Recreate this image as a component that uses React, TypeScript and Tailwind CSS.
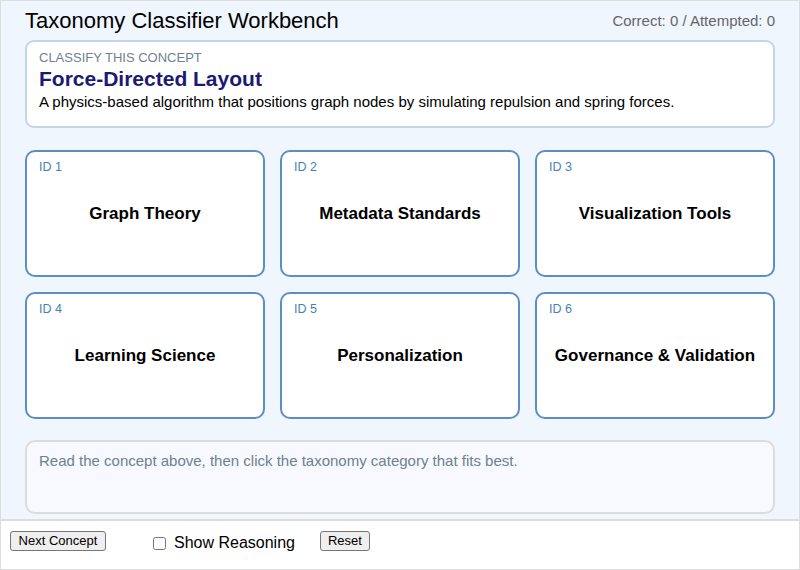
import React from "react";

const cats = [
  { id: 1, name: "Graph Theory" },
  { id: 2, name: "Metadata Standards" },
  { id: 3, name: "Visualization Tools" },
  { id: 4, name: "Learning Science" },
  { id: 5, name: "Personalization" },
  { id: 6, name: "Governance & Validation" },
];

export default function App() {
  return (
    <div
      className="w-[800px] h-[570px] border border-[#dddddd] flex flex-col bg-white"
      style={{ fontFamily: '"Liberation Sans", Arial, sans-serif' }}
    >
      <div className="h-[518px] bg-[#eff6fe] px-[24px] flex flex-col">
        <div className="h-[39px] flex items-center justify-between">
          <div className="text-[22px] text-black leading-[26px] pt-[1px]">Taxonomy Classifier Workbench</div>
          <div className="text-[15px] text-[#666666] leading-[18px] pt-[1px]">Correct: 0 / Attempted: 0</div>
        </div>
        <div className="h-[88px] bg-white border-2 border-[#c3d5ec] rounded-[9px] px-[12px] pt-[8px]">
          <div className="text-[13px] leading-[15px] text-[#708090]">CLASSIFY THIS CONCEPT</div>
          <div className="text-[21px] leading-[25px] font-bold text-[#1b1b73] mt-[1px]">Force-Directed Layout</div>
          <div className="text-[15px] leading-[18px] text-black mt-[2px]">
            A physics-based algorithm that positions graph nodes by simulating repulsion and spring forces.
          </div>
        </div>
        <div className="mt-[22px] grid grid-cols-3 gap-[15px]">
          {cats.map((c) => (
            <div
              key={c.id}
              className="relative h-[127px] bg-white border-2 border-[#5b8fc4] rounded-[10px] flex items-center justify-center"
            >
              <span className="absolute left-[12px] top-[8px] text-[12.5px] leading-[14px] text-[#4682b4]">ID {c.id}</span>
              <span className="text-[17px] font-bold text-black leading-[20px]">{c.name}</span>
            </div>
          ))}
        </div>
        <div className="mt-[21px] h-[74px] bg-[#f7f9fe] border-2 border-[#dcdcdc] rounded-[10px] px-[12px] pt-[10px]">
          <div className="text-[15px] leading-[18px] text-[#708090]">
            Read the concept above, then click the taxonomy category that fits best.
          </div>
        </div>
      </div>
      <div className="border-t-2 border-[#dddddd] flex-1 flex items-start pl-[9px] pt-[10px]">
        <button className="w-[96px] h-[20px] border border-[#767676] rounded-[3px] bg-[#efefef] text-[13px] leading-[16px] text-black">
          Next Concept
        </button>
        <label className="ml-[47px] flex items-center h-[20px] mt-[2px]">
          <input type="checkbox" className="w-[13px] h-[13px] m-0" />
          <span className="ml-[8px] text-[16px] leading-[20px] text-black">Show Reasoning</span>
        </label>
        <button className="ml-[25px] w-[50px] h-[20px] border border-[#767676] rounded-[3px] bg-[#efefef] text-[13px] leading-[16px] text-black">
          Reset
        </button>
      </div>
    </div>
  );
}
